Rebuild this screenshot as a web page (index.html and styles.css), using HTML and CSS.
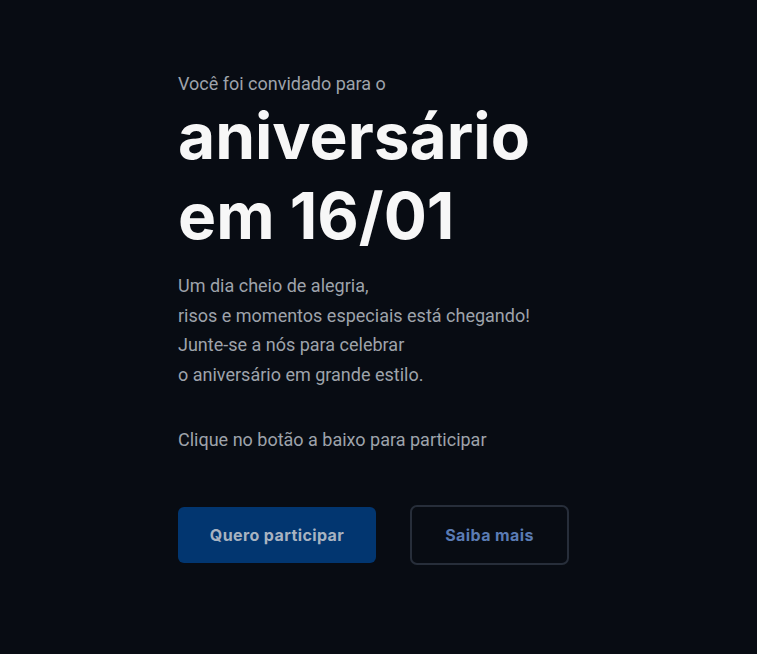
FILE: index.html
```html
<!DOCTYPE html>
<html lang="pt-BR">
<head>
<meta charset="utf-8">
<title>Convite</title>
<link rel="stylesheet" href="styles.css">
</head>
<body>
<main class="hero">
  <section class="content">
    <p class="eyebrow">Você foi convidado para o</p>
    <h1 class="title">aniversário<br>em 16/01</h1>
    <p class="lead">Um dia cheio de alegria,<br>risos e momentos especiais está chegando!<br>Junte-se a nós para celebrar<br>o aniversário em grande estilo.</p>
    <p class="cta-text">Clique no botão a baixo para participar</p>
    <div class="actions">
      <a class="btn btn-primary" href="#">Quero participar</a>
      <a class="btn btn-outline" href="#">Saiba mais</a>
    </div>
  </section>
</main>
</body>
</html>
```

FILE: styles.css
```css
* { box-sizing: border-box; }
html, body { margin: 0; padding: 0; }
body {
  background: #080c13;
  min-height: 654px;
  font-family: Roboto, "Liberation Sans", sans-serif;
}
.hero {
  padding: 72px 0 0 178px;
}
.content {
  display: flex;
  flex-direction: column;
  align-items: flex-start;
}
.eyebrow {
  margin: 0;
  font-size: 18px;
  line-height: 24px;
  color: #9ea3ab;
}
.title {
  margin: 0;
  font-family: Inter, "Liberation Sans", sans-serif;
  font-weight: 700;
  font-size: 64px;
  line-height: 80px;
  letter-spacing: 0;
  color: #f7f7f7;
}
.lead {
  margin: 15px 0 0 0;
  font-size: 18px;
  line-height: 29.5px;
  color: #9ea3ab;
}
.cta-text {
  margin: 39px 0 0 0;
  font-size: 18px;
  line-height: 24px;
  color: #9ea3ab;
}
.actions {
  display: flex;
  align-items: center;
  gap: 34px;
  margin-top: 53px;
}
.btn {
  display: flex;
  align-items: center;
  justify-content: center;
  font-family: Inter, "Liberation Sans", sans-serif;
  font-weight: 700;
  font-size: 16px;
  letter-spacing: 0.4px;
  text-decoration: none;
  border-radius: 6px;
}
.btn-primary {
  width: 198px;
  height: 56px;
  background: #023670;
  color: #a8b3c1;
}
.btn-outline {
  width: 159px;
  height: 60px;
  border: 2px solid #272e3a;
  border-radius: 7px;
  color: #5a7bb3;
}
```
